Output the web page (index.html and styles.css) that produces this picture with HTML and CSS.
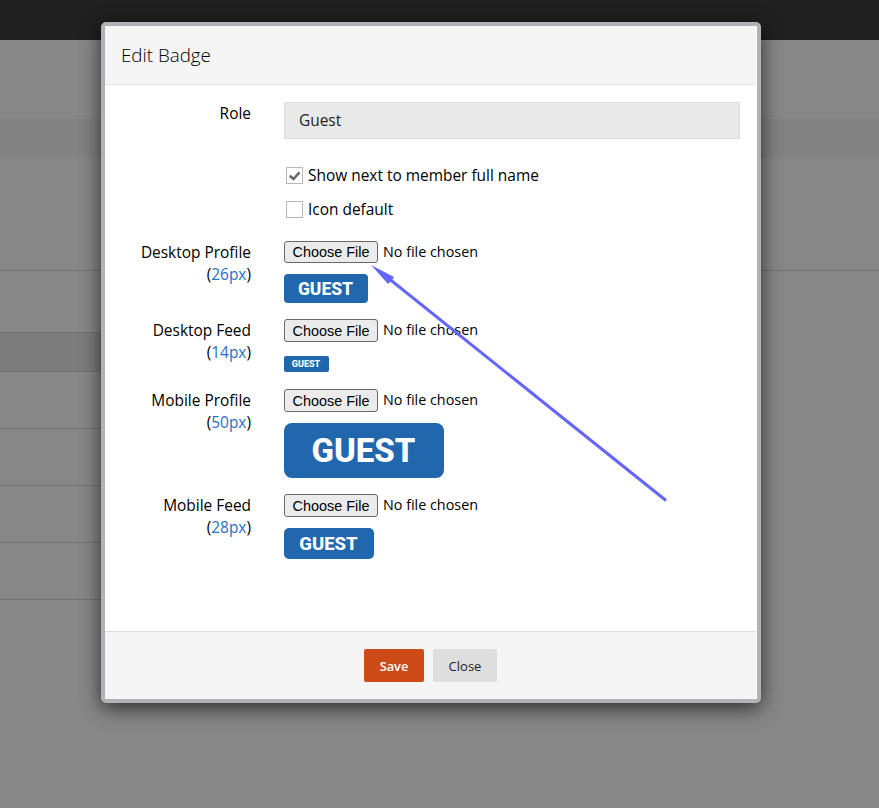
FILE: index.html
```html
<!DOCTYPE html>
<html lang="en">
<head>
<meta charset="utf-8">
<title>Edit Badge</title>
<link rel="stylesheet" href="styles.css">
</head>
<body>
<div class="page" aria-hidden="true">
  <div class="topbar"></div>
  <div class="intro"></div>
  <div class="tabs"></div>
  <div class="heading"></div>
  <div class="table">
    <div class="line filter"></div>
    <div class="line thead"></div>
    <div class="line"></div>
    <div class="line"></div>
    <div class="line"></div>
    <div class="line"></div>
  </div>
</div>
<div class="modal" role="dialog" aria-labelledby="title">
  <header class="modal-header"><h1 id="title">Edit Badge</h1></header>
  <main class="modal-body">
    <div class="row role">
      <div class="label">Role</div>
      <div class="field">Guest</div>
    </div>
    <div class="checks">
      <div class="check"><span class="box"><svg viewBox="0 0 17 17" width="17" height="17"><path d="M3.8 8.7l3.7 3.3 6-6.6" fill="none" stroke="#666" stroke-width="2.5"/></svg></span><span class="check-text">Show next to member full name</span></div>
      <div class="check"><span class="box"></span><span class="check-text">Icon default</span></div>
    </div>
    <div class="row desktop-profile">
      <div class="label">Desktop Profile<br>(<a>26px</a>)</div>
      <div class="upload"><div class="file"><button>Choose File</button><span>No file chosen</span></div><div class="badge b26">GUEST</div></div>
    </div>
    <div class="row desktop-feed">
      <div class="label">Desktop Feed<br>(<a>14px</a>)</div>
      <div class="upload"><div class="file"><button>Choose File</button><span>No file chosen</span></div><div class="badge b14">GUEST</div></div>
    </div>
    <div class="row mobile-profile">
      <div class="label">Mobile Profile<br>(<a>50px</a>)</div>
      <div class="upload"><div class="file"><button>Choose File</button><span>No file chosen</span></div><div class="badge b50">GUEST</div></div>
    </div>
    <div class="row mobile-feed">
      <div class="label">Mobile Feed<br>(<a>28px</a>)</div>
      <div class="upload"><div class="file"><button>Choose File</button><span>No file chosen</span></div><div class="badge b28">GUEST</div></div>
    </div>
  </main>
  <footer class="modal-footer"><button class="btn save">Save</button><button class="btn close">Close</button></footer>
</div>
<svg class="arrow" viewBox="0 0 300 245" width="300" height="245"><path d="M20 19.5L296 240.5" fill="none" stroke="#6666ff" stroke-width="3"/><path d="M1 5L24 17L22 20L18 24Z" fill="#6666ff"/></svg>
</body>
</html>
```
FILE: styles.css
```css
* { box-sizing: border-box; }
body { margin: 0; height: 808px; overflow: hidden; position: relative; font: 15.45px/22px "Open Sans", sans-serif; color: #000; background: #878787; }

/* Page behind the dialog */
.topbar { height: 40px; background: #202020; }
.intro { height: 79px; }
.tabs { height: 39px; background: #828282; }
.heading { height: 113px; border-bottom: 1px solid #727272; }
.table { width: 430px; }
.line { height: 57px; border-bottom: 1px solid #727272; }
.filter { height: 62px; }
.thead { height: 39px; background: #7c7c7c; }

/* Dialog */
.modal { position: absolute; left: 101px; top: 22px; width: 660px; height: 681px; border: 4px solid #b2b1b5; border-radius: 5px; background: #fff; box-shadow: 0 5px 20px rgba(0,0,0,.68); display: flex; flex-direction: column; }
.modal-header { height: 59px; margin-right: 1px; padding: 0 16px; background: #f5f5f5; border-bottom: 1px solid #e5e5e5; display: flex; align-items: center; }
h1 { margin: 0; font-size: 18.8px; font-weight: 300; line-height: 26px; }
.modal-body { flex: 1; padding: 17px 17px 0 0; }
.row { display: grid; grid-template-columns: 146px 1fr; column-gap: 33px; }
.role { height: 73px; }
.label { text-align: right; }
.field { height: 37px; border: 1px solid #dcdcdc; background: #e9e9e9; padding: 0 14px; line-height: 35px; color: #222; }

/* Checkboxes */
.checks { height: 66px; padding-left: 181px; }
.check { height: 34px; display: flex; gap: 5px; }
.check-text { line-height: 0; }
.box { flex: none; width: 17px; height: 17px; margin-top: -8px; border: 1px solid #b8b8b8; background: #fff; }
.box svg { display: block; margin: -1px; }

/* File rows */
.label a { color: #2671c5; }
.desktop-profile { height: 78px; }
.desktop-feed { height: 70px; }
.mobile-profile { height: 105px; }
.file { height: 23px; display: flex; gap: 5px; font-size: 14.35px; }
.file button { width: 94px; height: 23px; padding: 0; border: 1px solid #686868; border-radius: 3px; background: #ebebeb; color: #000; font: 14.4px/20px "Liberation Sans", sans-serif; }
.desktop-profile .file button { height: 22px; }
.badge { margin-top: 11px; padding-right: 1px; background: #2067ae; color: #fff; font-family: Roboto, sans-serif; font-weight: 800; display: flex; align-items: center; justify-content: center; }
.b26 { width: 84px; height: 29px; margin-top: 10px; font-size: 17.5px; border-radius: 4px; }
.b14 { width: 45px; height: 16px; margin-top: 14px; font-size: 9px; border-radius: 2px; }
.b50 { width: 160px; height: 55px; font-size: 33px; border-radius: 8px; }
.b28 { width: 90px; height: 31px; font-size: 18.5px; border-radius: 5px; }

/* Footer */
.modal-footer { height: 68px; margin-right: 1px; border-top: 1px solid #ddd; background: #f5f5f5; display: flex; justify-content: center; gap: 9px; padding-top: 17px; }
.btn { height: 33px; border: 0; border-radius: 2px; padding: 0; font: 13px/20px "Open Sans", sans-serif; }
.save { width: 60px; background: #cc4b19; color: #fff; font-weight: 600; font-size: 12.8px; }
.close { width: 64px; background: #dedede; color: #222; }

.arrow { position: absolute; left: 370px; top: 260px; }
```
